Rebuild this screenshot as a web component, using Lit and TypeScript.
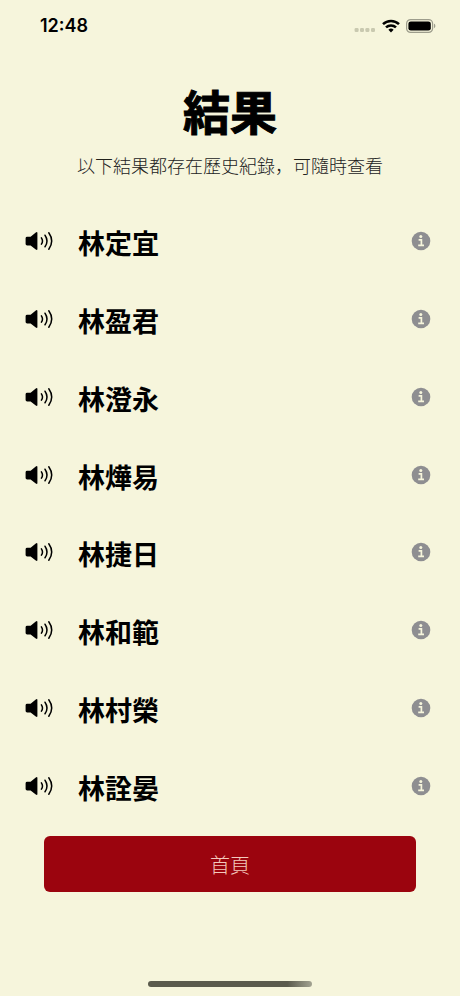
import { LitElement, html, css } from "lit";
import { customElement, property } from "lit/decorators.js";

const NAMES = ["林定宜", "林盈君", "林澄永", "林燁易", "林捷日", "林和範", "林村榮", "林詮晏"];

@customElement("status-bar")
class StatusBar extends LitElement {
  static styles = css`
    :host {
      display: flex;
      justify-content: space-between;
      align-items: center;
      height: 52px;
      padding: 0 24px 0 40px;
      font: 600 18px/24px Inter, "Liberation Sans", sans-serif;
    }
    .icons {
      display: flex;
      align-items: center;
      gap: 6px;
    }
    svg {
      display: block;
    }
  `;

  render() {
    return html`
      <span>12:48</span>
      <div class="icons">
        <svg width="22" height="16" viewBox="0 0 22 16" fill="#c9c9b0">
          <rect x="0.6" y="10" width="4" height="4" rx="1.2" />
          <rect x="6" y="10" width="4" height="4" rx="1.2" />
          <rect x="11.4" y="10" width="4" height="4" rx="1.2" />
          <rect x="17" y="10" width="4" height="4" rx="1.2" />
        </svg>
        <svg width="18" height="14" viewBox="0 0 18 14" fill="none" stroke="#000" stroke-width="2.5">
          <path d="M1 5.2A11.4 11.4 0 0 1 17 5.2" />
          <path d="M4 8.4A7.2 7.2 0 0 1 14 8.4" />
          <path d="M9 13.4L6.4 10.8A3.8 3.8 0 0 1 11.6 10.8Z" fill="#000" stroke="none" />
        </svg>
        <svg width="30" height="14" viewBox="0 0 30 14">
          <rect x="0.6" y="0.6" width="26" height="12.8" rx="4" fill="none" stroke="#9d9d8c" stroke-width="1.2" />
          <rect x="2.4" y="2.4" width="22.4" height="9.2" rx="2.4" fill="#000" />
          <path d="M28 4.8C29.8 5.4 29.8 8.6 28 9.2Z" fill="#9d9d8c" />
        </svg>
      </div>
    `;
  }
}

@customElement("name-row")
class NameRow extends LitElement {
  @property() name = "";

  static styles = css`
    :host {
      display: flex;
      align-items: center;
      padding: 0 29px 0 24px;
    }
    button {
      display: block;
      padding: 0;
      border: 0;
      background: none;
      color: inherit;
      cursor: pointer;
    }
    svg {
      display: block;
    }
    .name {
      flex: 1;
      margin-left: 24px;
      padding-top: 4px;
      font-size: 27px;
      line-height: 36px;
      font-weight: 700;
    }
  `;

  render() {
    return html`
      <button aria-label="播放 ${this.name}">
        <svg width="30" height="20" viewBox="0 0 30 20">
          <path
            d="M3.2 5.8H6.6L11.8 1.4Q13.4 .4 13.4 2V18Q13.4 19.6 11.8 18.6L6.6 14.4H3.2Q1.6 14.4 1.6 13V7.2Q1.6 5.8 3.2 5.8Z"
            fill="#000"
          />
          <g fill="none" stroke="#000" stroke-width="1.5" stroke-linecap="round">
            <path d="M17.4 6.8Q19.6 10 17.4 13.2" />
            <path d="M21 4.2Q25 10 21 15.8" />
            <path d="M24.8 1.8Q30.6 10 24.8 18.2" />
          </g>
        </svg>
      </button>
      <span class="name">${this.name}</span>
      <button aria-label="${this.name} 詳情">
        <svg width="20" height="20" viewBox="0 0 20 20">
          <circle cx="10" cy="10" r="9.3" fill="#8e8e91" />
          <circle cx="9.8" cy="5.6" r="1.5" fill="#f6f5dc" />
          <path d="M7.6 8.8H10.4V14.2M7.2 14.4H13" fill="none" stroke="#f6f5dc" stroke-width="1.7" />
        </svg>
      </button>
    `;
  }
}

@customElement("app-root")
class AppRoot extends LitElement {
  static styles = css`
    :host {
      display: flex;
      flex-direction: column;
      box-sizing: border-box;
      min-height: 100vh;
      background: #f6f5dc;
      color: #000;
      font-family: "Noto Sans CJK JP", "Noto Sans CJK TC", sans-serif;
    }
    header {
      padding: 24px 16px;
      text-align: center;
    }
    h1 {
      margin: 0;
      font-size: 47px;
      line-height: 68px;
      font-weight: 700;
      -webkit-text-stroke: 1px #000;
    }
    p {
      margin: 8px 0 0;
      font-size: 18px;
      line-height: 26px;
      font-weight: 300;
      color: #22221c;
    }
    ul {
      flex: 1;
      display: grid;
      grid-auto-rows: minmax(48px, 1fr);
      margin: 0;
      padding: 0;
      list-style: none;
    }
    li {
      display: grid;
    }
    footer {
      display: flex;
      flex-direction: column;
      padding: 11px 44px 9px;
    }
    .home {
      height: 56px;
      border: 0;
      border-radius: 6px;
      background: #9b040e;
      color: #f3c9bd;
      font: inherit;
      font-size: 20px;
      font-weight: 300;
      cursor: pointer;
    }
    .indicator {
      align-self: center;
      width: 44%;
      height: 6px;
      margin-top: 89px;
      border-radius: 3px;
      background: linear-gradient(90deg, #5b5b4d 85%, #a3a392);
    }
  `;

  render() {
    return html`
      <status-bar></status-bar>
      <header>
        <h1>結果</h1>
        <p>以下結果都存在歷史紀錄，可隨時查看</p>
      </header>
      <ul>
        ${NAMES.map((name) => html`<li><name-row .name=${name}></name-row></li>`)}
      </ul>
      <footer>
        <button class="home">首頁</button>
        <div class="indicator"></div>
      </footer>
    `;
  }
}
